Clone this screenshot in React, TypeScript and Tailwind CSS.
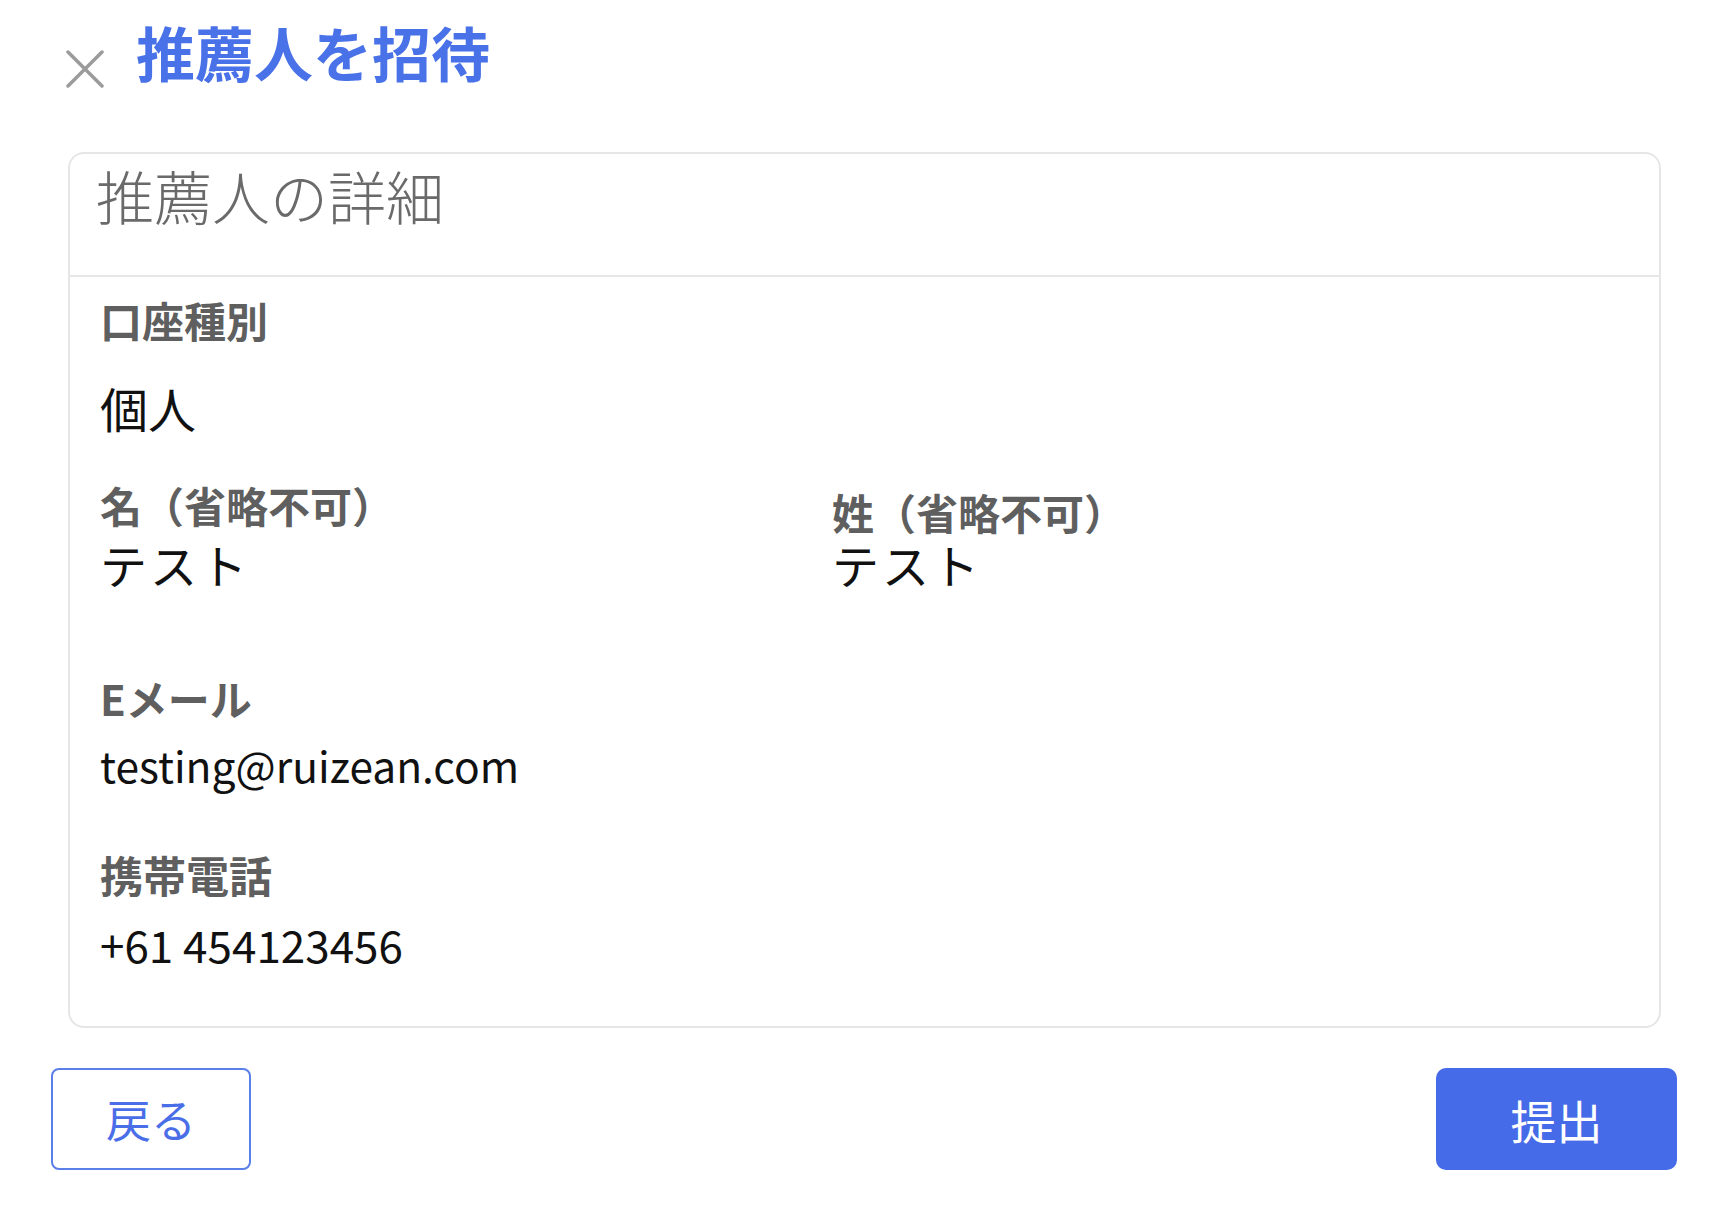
import React from "react";

const jp = { fontFamily: '"Noto Sans CJK JP", "Noto Sans", sans-serif' };

export default function App() {
  return (
    <div className="w-[1728px] h-[1206px] bg-white overflow-hidden" style={jp}>
      {/* Header */}
      <div className="flex items-start pl-[66px] pt-[22px]">
        <svg width="38" height="38" viewBox="0 0 38 38" className="mt-[28px]">
          <path d="M2 2 L36 36 M36 2 L2 36" stroke="#9b9b9b" strokeWidth="3.5" strokeLinecap="round" />
        </svg>
        <h1 className="ml-[32px] text-[59px] leading-none font-bold text-[#4a72e8]">
          推薦人を招待
        </h1>
      </div>

      {/* Card */}
      <div className="ml-[68px] mt-[64px] w-[1593px] rounded-[16px] border-2 border-[#e6e6e6]">
        <div className="h-[123px] pl-[26px] pt-[12px] border-b-2 border-[#e6e6e6]">
          <div className="text-[58px] leading-none font-light text-[#6a6a6a]">推薦人の詳細</div>
        </div>
        <div className="pl-[30px] pt-[22px] pb-[60px]">
          <div className="text-[42px] leading-none font-bold text-[#5f5f5f]">口座種別</div>
          <div className="mt-[42px] text-[48px] leading-none text-[#111]">個人</div>

          <div className="mt-[53px] grid grid-cols-[732px_1fr]">
            <div>
              <div className="text-[42px] leading-none font-bold text-[#5f5f5f]">名（省略不可）</div>
              <div className="mt-[14px] text-[47px] leading-none tracking-[3px] text-[#111]">テスト</div>
            </div>
            <div>
              <div className="mt-[7px] text-[42px] leading-none font-bold text-[#5f5f5f]">姓（省略不可）</div>
              <div className="mt-[7px] text-[47px] leading-none tracking-[3px] text-[#111]">テスト</div>
            </div>
          </div>

          <div className="mt-[90px] text-[42px] leading-none font-bold text-[#5f5f5f]">Eメール</div>
          <div className="mt-[25px] text-[42.5px] leading-none text-[#111]">testing@ruizean.com</div>

          <div className="mt-[66px] text-[43px] leading-none font-bold text-[#5f5f5f]">携帯電話</div>
          <div className="mt-[26px] text-[44px] leading-none text-[#111]">+61 454123456</div>
        </div>
      </div>

      {/* Footer */}
      <div className="mt-[40px] px-[51px] flex justify-between">
        <button className="w-[200px] h-[102px] rounded-[8px] border-2 border-[#5a7fe8] bg-white text-[45px] leading-none text-[#4a6ee8]">
          戻る
        </button>
        <button className="w-[241px] h-[102px] rounded-[10px] bg-[#466be8] text-[46px] leading-none text-white">
          提出
        </button>
      </div>
    </div>
  );
}
